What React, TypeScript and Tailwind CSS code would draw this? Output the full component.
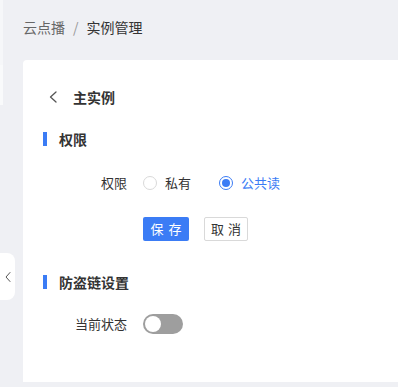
import React from "react";

const font = { fontFamily: '"Noto Sans CJK SC", "Noto Sans", sans-serif' };

function Radio({ checked, label }: { checked?: boolean; label: string }) {
  return (
    <div className="flex items-center gap-[8px]">
      <span
        className={
          checked
            ? "w-[14px] h-[14px] rounded-full border border-[#3b7cf5] bg-white flex items-center justify-center"
            : "w-[14px] h-[14px] rounded-full border border-[#d9d9d9] bg-white"
        }
      >
        {checked && <span className="w-[8px] h-[8px] rounded-full bg-[#3b7cf5]" />}
      </span>
      <span className={checked ? "text-[13px] leading-[20px] text-[#3b7cf5]" : "text-[13px] leading-[20px] text-[#333]"}>
        {label}
      </span>
    </div>
  );
}

function Heading({ text }: { text: string }) {
  return (
    <div className="flex items-center h-[20px] gap-[12px]">
      <span className="w-[4px] h-[14px] bg-[#3b7cf5]" />
      <span className="text-[14px] leading-[20px] font-semibold text-[#333]">{text}</span>
    </div>
  );
}

export default function App() {
  return (
    <div style={font} className="relative w-[398px] h-[387px] overflow-hidden bg-[#eff0f4] flex">
      <div className="w-[3px] flex flex-col">
        <div className="h-[65px] bg-[#f6f7f9]" />
        <div className="h-[40px] bg-[#f9fafb]" />
      </div>
      <div className="flex-1 flex flex-col pl-[20px]">
        <div className="pt-[17px] flex items-center text-[14px] leading-[20px]">
          <span className="text-[#666]">云点播</span>
          <span className="text-[#999] mx-[8px]">/</span>
          <span className="text-[#333]">实例管理</span>
        </div>
        <div className="mt-[23px] h-[322px] bg-white rounded-tl-[4px] pl-[20px] pt-[27px]">
          <div className="flex items-center h-[20px] pl-[5px] gap-[15px]">
            <svg width="10" height="14" viewBox="0 0 10 14" fill="none">
              <path d="M8 2 L2.5 7 L8 12" stroke="#555" strokeWidth="1.3" strokeLinecap="round" strokeLinejoin="round" />
            </svg>
            <span className="text-[14px] leading-[20px] font-semibold text-[#333]">主实例</span>
          </div>
          <div className="mt-[22px]">
            <Heading text="权限" />
          </div>
          <div className="mt-[24px] flex items-center h-[20px]">
            <span className="w-[84px] text-right text-[13px] leading-[20px] text-[#333]">权限</span>
            <div className="ml-[16px] flex items-center gap-[28px]">
              <Radio label="私有" />
              <Radio checked label="公共读" />
            </div>
          </div>
          <div className="mt-[24px] flex items-center gap-[15px] pl-[100px]">
            <button className="w-[46px] h-[24px] rounded-[2px] bg-[#3b7cf5] text-white text-[13px] leading-[20px] tracking-[5px] pl-[5px]">
              保存
            </button>
            <button className="w-[44px] h-[24px] rounded-[2px] border border-[#d9d9d9] bg-white text-[#333] text-[13px] leading-[20px] tracking-[4px] pl-[4px]">
              取消
            </button>
          </div>
          <div className="mt-[31px]">
            <Heading text="防盗链设置" />
          </div>
          <div className="mt-[22px] flex items-center h-[20px]">
            <span className="w-[84px] text-right text-[13px] leading-[20px] text-[#333]">当前状态</span>
            <div className="ml-[16px] w-[40px] h-[20px] rounded-full bg-[#9e9e9e] flex items-center px-[2px]">
              <span className="w-[16px] h-[16px] rounded-full bg-white" />
            </div>
          </div>
        </div>
      </div>
      <div className="absolute left-0 top-[253px] w-[15px] h-[47px] bg-white rounded-r-[8px] flex items-center justify-center">
        <svg width="8" height="12" viewBox="0 0 8 12" fill="none">
          <path d="M6 1.5 L2 6 L6 10.5" stroke="#555" strokeWidth="1" strokeLinecap="round" strokeLinejoin="round" />
        </svg>
      </div>
    </div>
  );
}
